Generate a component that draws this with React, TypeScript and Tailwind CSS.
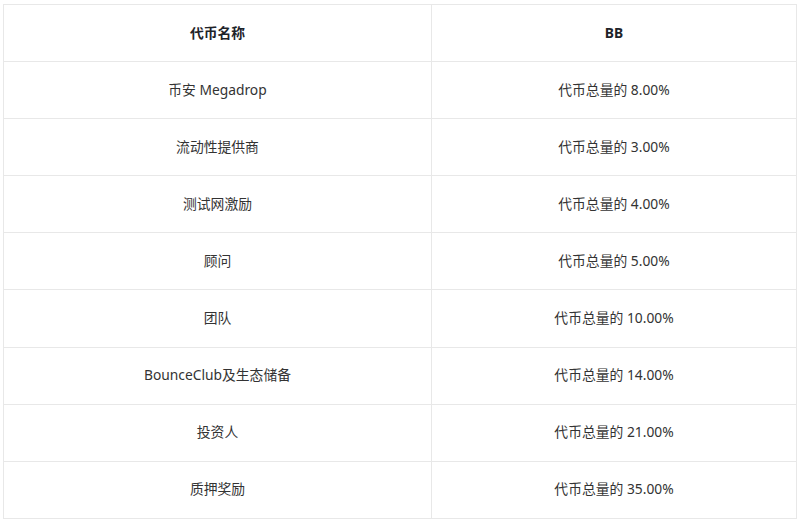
const rows: [string, string][] = [
  ["币安 Megadrop", "代币总量的 8.00%"],
  ["流动性提供商", "代币总量的 3.00%"],
  ["测试网激励", "代币总量的 4.00%"],
  ["顾问", "代币总量的 5.00%"],
  ["团队", "代币总量的 10.00%"],
  ["BounceClub及生态储备", "代币总量的 14.00%"],
  ["投资人", "代币总量的 21.00%"],
  ["质押奖励", "代币总量的 35.00%"],
];

export default function App() {
  return (
    <div
      className="h-[522px] w-[800px] bg-white pl-[3px] pt-[4px]"
      style={{ fontFamily: '"Noto Sans", "Noto Sans CJK SC", sans-serif' }}
    >
      <table className="w-[794px] border-collapse border border-[#e8e8e8] text-[13.8px] text-[#333]">
        <thead>
          <tr className="h-[57.1px]">
            <th className="w-[428px] border border-[#e8e8e8] text-center font-bold text-[#1e2329]">代币名称</th>
            <th className="border border-[#e8e8e8] text-center font-bold text-[#1e2329]">BB</th>
          </tr>
        </thead>
        <tbody>
          {rows.map(([name, share]) => (
            <tr key={name} className="h-[57.1px]">
              <td className="border border-[#e8e8e8] text-center">{name}</td>
              <td className="border border-[#e8e8e8] text-center">{share}</td>
            </tr>
          ))}
        </tbody>
      </table>
    </div>
  );
}
